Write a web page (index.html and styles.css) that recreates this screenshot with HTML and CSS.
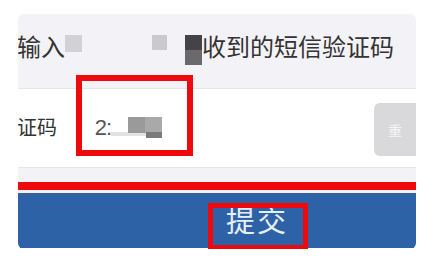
FILE: index.html
```html
<!DOCTYPE html>
<html lang="zh">
<head>
<meta charset="utf-8">
<link rel="stylesheet" href="styles.css">
</head>
<body>
<div class="card">
  <div class="hint">
    <span class="txt">输入</span><span class="blk b1"></span><span class="blk b2"></span><span class="blk b3"></span><span class="txt">收到的短信验证码</span>
  </div>
  <div class="row">
    <span class="label">证码</span>
    <div class="input">
      <span class="val">2:</span>
      <span class="mask"><span class="m-line"></span><span class="m-top"></span><span class="m-dark"></span></span>
    </div>
    <div class="resend">重</div>
  </div>
  <div class="gap"></div>
  <div class="stripe"></div>
  <div class="thin"></div>
  <div class="submit"><span>提交</span></div>
  <div class="mark mark-input"></div>
  <div class="mark mark-submit"></div>
</div>
</body>
</html>
```
FILE: styles.css
```css
html, body {
  margin: 0;
  padding: 0;
  background: #ffffff;
}
body {
  font-family: "Noto Sans CJK SC", "Noto Sans", sans-serif;
  width: 437px;
  height: 270px;
  overflow: hidden;
}
.card {
  position: relative;
  margin: 14px 0 0 18px;
  width: 398px;
  height: 235px;
  border-radius: 6px;
  overflow: hidden;
  background: #ffffff;
}
.hint {
  height: 75px;
  background: #f3f2f6;
  display: flex;
  align-items: flex-start;
  padding-top: 17px;
  box-sizing: border-box;
  margin-left: -1px;
  border-bottom: 1px solid #e6e5e9;
}
.txt {
  font-size: 24px;
  line-height: 30px;
  color: #333333;
}
.blk {
  display: inline-block;
}
.b1 {
  width: 17px;
  height: 17px;
  background: #d2d2d4;
  margin-top: 4px;
}
.b2 {
  width: 15px;
  height: 15px;
  background: #cacacc;
  margin: 4px 0 0 70px;
}
.b3 {
  width: 17px;
  height: 30px;
  margin: 4px 0 0 18px;
  background: linear-gradient(#444448 0 50%, #6a6a6c 50% 100%);
}
.row {
  height: 78px;
  display: flex;
  align-items: center;
  border-bottom: 1px solid #e6e5e9;
  margin-left: -1px;
}
.label {
  font-size: 20px;
  color: #333333;
  width: 60px;
  line-height: 24px;
  padding-bottom: 2px;
}
.input {
  display: flex;
  align-items: center;
  margin-left: 18px;
  width: 280px;
  height: 30px;
}
.val {
  font-family: "Liberation Sans", sans-serif;
  font-size: 22px;
  color: #555;
  line-height: 22px;
  letter-spacing: -1px;
}
.mask {
  position: relative;
  display: inline-block;
  width: 52px;
  height: 24px;
}
.m-line {
  position: absolute;
  left: 0;
  top: 16px;
  width: 36px;
  height: 4px;
  background: #e2e2e2;
}
.m-top {
  position: absolute;
  left: 17px;
  top: 1px;
  width: 34px;
  height: 16px;
  background: linear-gradient(90deg, #9a9a9a 0 50%, #a9a9a9 50% 100%);
}
.m-dark {
  position: absolute;
  left: 35px;
  top: 16px;
  width: 16px;
  height: 6px;
  background: #7a7a7a;
}
.resend {
  margin-left: auto;
  margin-right: -10px;
  width: 52px;
  height: 53px;
  border-radius: 6px;
  background: #d9d9db;
  color: #f4f4f4;
  font-size: 14px;
  display: flex;
  align-items: center;
  padding-left: 14px;
  box-sizing: border-box;
  margin-top: 3px;
}
.gap {
  height: 14px;
  background: #f3f2f6;
}
.stripe {
  height: 8px;
  background: #ee0a0c;
  box-shadow: 0 1px 1px rgba(238, 10, 12, 0.35);
}
.thin {
  height: 3px;
  background: #fbeeee;
}
.submit {
  height: 55px;
  background: #2d63a6;
  display: flex;
  align-items: center;
  justify-content: center;
  padding-left: 80px;
  box-sizing: border-box;
}
.submit span {
  font-size: 29px;
  letter-spacing: 2px;
  color: #e9eef6;
  line-height: 32px;
  padding-bottom: 4px;
}
.mark {
  position: absolute;
  border: 6px solid #ee0a0c;
  box-sizing: border-box;
}
.mark-input {
  left: 58px;
  top: 61px;
  width: 117px;
  height: 81px;
}
.mark-submit {
  left: 190px;
  top: 189px;
  width: 100px;
  height: 47px;
  border-width: 5px;
}
```
